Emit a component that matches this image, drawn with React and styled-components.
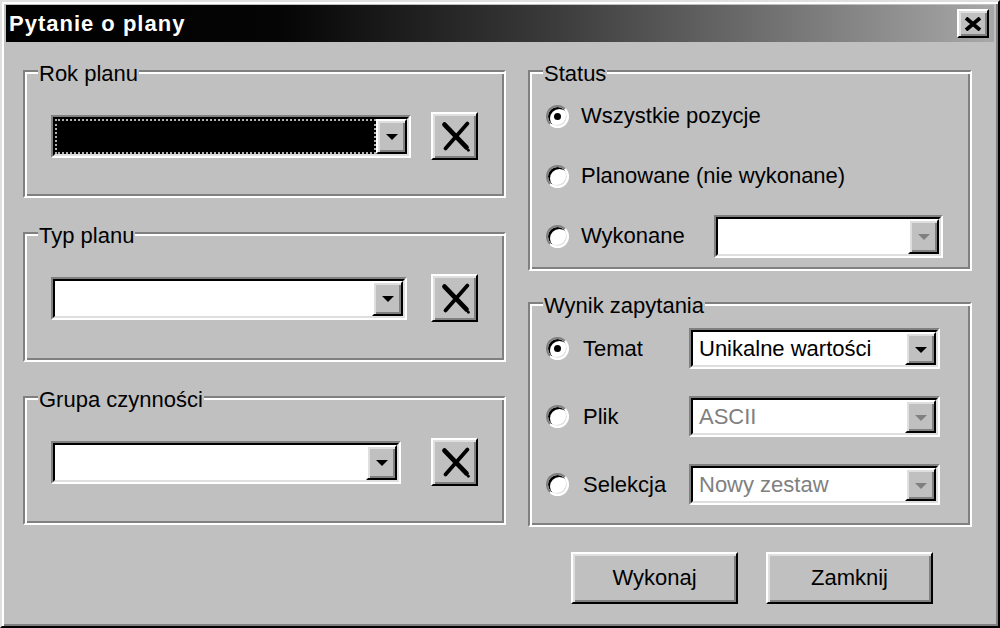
import React from 'react'
import styled, { createGlobalStyle } from 'styled-components'

const GlobalStyle = createGlobalStyle`
	html, body {
		margin: 0;
		padding: 0;
		background: #c0c0c0;
	}
	body {
		font-family: "Liberation Sans", Arial, sans-serif;
		font-size: 22px;
		color: #000;
	}
`

const Window = styled.div`
	width: 1000px;
	height: 628px;
	box-sizing: border-box;
	display: flex;
	flex-direction: column;
	background: #c0c0c0;
	border: 2px solid;
	border-color: #dfdfdf #000 #000 #dfdfdf;
	box-shadow: inset 2px 2px 0 #fff, inset -2px -2px 0 #808080;
	padding: 3px 4px 4px 4px;
`

const TitleBar = styled.div`
	height: 37px;
	flex: none;
	display: flex;
	align-items: center;
	justify-content: space-between;
	padding: 0 5px 0 3px;
	background: linear-gradient(to right, #000 0%, #050505 28%, #3a3a3a 55%, #a8a8a8 100%);
`

const Title = styled.span`
	color: #fff;
	font-weight: bold;
	font-size: 22px;
	letter-spacing: 1px;
`

const raised = `
	border: 2px solid;
	border-color: #fff #000 #000 #fff;
	box-shadow: inset 2px 2px 0 #dfdfdf, inset -2px -2px 0 #808080;
	background: #c0c0c0;
	box-sizing: border-box;
`

const CloseButton = styled.div`
	${raised}
	width: 32px;
	height: 29px;
	display: flex;
	align-items: center;
	justify-content: center;
`

const Body = styled.div`
	flex: 1;
	display: flex;
	gap: 22px;
	padding: 28px 17px 0 17px;
`

const Column = styled.div`
	display: flex;
	flex-direction: column;
	gap: ${p => p.$gap}px;
	width: ${p => p.$width}px;
`

// etched frame: dark line outside, white line inside (top/left), reversed bottom/right
const Group = styled.div`
	position: relative;
	height: ${p => p.$height}px;
	box-sizing: border-box;
	border: 2px solid;
	border-color: #808080 #fff #fff #808080;
	box-shadow: inset 2px 2px 0 #fff, inset -2px -2px 0 #808080;
	padding: ${p => p.$pad};
`

const Legend = styled.span`
	position: absolute;
	top: -10px;
	left: 13px;
	padding: 0 1px;
	background: #c0c0c0;
	line-height: 24px;
	white-space: nowrap;
`

const FieldRow = styled.div`
	display: flex;
	align-items: center;
	justify-content: space-between;
	padding: 0 ${p => p.$right}px 0 ${p => p.$left}px;
`

const ComboFrame = styled.div`
	width: ${p => p.$width}px;
	height: ${p => p.$height || 43}px;
	box-sizing: border-box;
	border: 2px solid;
	border-color: #808080 #fff #fff #808080;
	flex: none;
`

const ComboInner = styled.div`
	height: 100%;
	box-sizing: border-box;
	border: 2px solid;
	border-color: #000 #dfdfdf #dfdfdf #000;
	background: #fff;
	display: flex;
`

const FieldText = styled.div`
	flex: 1;
	display: flex;
	align-items: center;
	padding-left: 6px;
	white-space: nowrap;
	overflow: hidden;
	color: ${p => (p.$disabled ? '#808080' : '#000')};
	background: ${p => (p.$selected ? '#000' : '#fff')};
	outline: ${p => (p.$selected ? '2px dotted #b0b0b0' : 'none')};
	outline-offset: -2px;
`

const DropButton = styled.div`
	${raised}
	width: 31px;
	flex: none;
	display: flex;
	align-items: center;
	justify-content: center;
`

const Arrow = styled.span`
	width: 0;
	height: 0;
	border-left: 6px solid transparent;
	border-right: 6px solid transparent;
	border-top: 6px solid ${p => (p.$disabled ? '#808080' : '#000')};
	margin-top: 2px;
`

const ClearButton = styled.div`
	${raised}
	width: 47px;
	height: 48px;
	flex: none;
	display: flex;
	align-items: center;
	justify-content: center;
`

const RadioList = styled.div`
	display: flex;
	flex-direction: column;
	gap: ${p => p.$gap}px;
`

const RadioRow = styled.div`
	display: flex;
	align-items: center;
	height: ${p => p.$height}px;
`

const Radio = styled.span`
	width: 23px;
	height: 23px;
	flex: none;
	box-sizing: border-box;
	border-radius: 50%;
	border: 2px solid;
	border-color: #808080 #fff #fff #808080;
	box-shadow: inset 2px 2px 0 #000, inset -1px -1px 0 #dfdfdf;
	background: #fff;
	display: flex;
	align-items: center;
	justify-content: center;
	&::after {
		content: '';
		width: 7px;
		height: 7px;
		border-radius: 50%;
		background: ${p => (p.$checked ? '#000' : 'transparent')};
	}
`

const RadioLabel = styled.span`
	margin-left: ${p => p.$gap || 12}px;
	white-space: nowrap;
	width: ${p => (p.$width ? p.$width + 'px' : 'auto')};
`

const ButtonRow = styled.div`
	display: flex;
	gap: 28px;
	padding: 0 0 0 43px;
	margin-top: -6px;
`

const PushButton = styled.div`
	${raised}
	width: 167px;
	height: 52px;
	display: flex;
	align-items: center;
	justify-content: center;
`

const CloseGlyph = () => (
	<svg width="18" height="14" viewBox="0 0 18 14">
		<path d="M2 1 L16 13 M16 1 L2 13" stroke="#000" strokeWidth="3.8" />
	</svg>
)

const ClearGlyph = () => (
	<svg width="43" height="44" viewBox="0 0 43 44" style={{ marginLeft: 2 }}>
		<path d="M10 10 L33 34" stroke="#000" strokeWidth="5" strokeLinecap="round" />
		<path d="M34 9 L11 35" stroke="#000" strokeWidth="4" strokeLinecap="round" />
		<circle cx="35" cy="37" r="1.5" fill="#000" />
	</svg>
)

const Combo = ({ width, height, text, disabled, selected }) => (
	<ComboFrame $width={width} $height={height}>
		<ComboInner>
			<FieldText $disabled={disabled} $selected={selected}>{text}</FieldText>
			<DropButton>
				<Arrow $disabled={disabled} />
			</DropButton>
		</ComboInner>
	</ComboFrame>
)

const PickGroup = ({ label, height, comboWidth, selected }) => (
	<Group $height={height} $pad="40px 0 0 0">
		<Legend>{label}</Legend>
		<FieldRow $left={26} $right={26}>
			<Combo width={comboWidth} selected={selected} />
			<ClearButton>
				<ClearGlyph />
			</ClearButton>
		</FieldRow>
	</Group>
)

export default function App() {
	return (
		<>
			<GlobalStyle />
			<Window>
				<TitleBar>
					<Title>Pytanie o plany</Title>
					<CloseButton>
						<CloseGlyph />
					</CloseButton>
				</TitleBar>
				<Body>
					<Column $width={483} $gap={34}>
						<PickGroup label="Rok planu" height={128} comboWidth={360} selected />
						<PickGroup label="Typ planu" height={130} comboWidth={356} />
						<PickGroup label="Grupa czynności" height={129} comboWidth={350} />
					</Column>
					<Column $width={444} $gap={31}>
						<Group $height={201} $pad="22px 26px 0 16px">
							<Legend>Status</Legend>
							<RadioList $gap={16}>
								<RadioRow $height={44}>
									<Radio $checked />
									<RadioLabel>Wszystkie pozycje</RadioLabel>
								</RadioRow>
								<RadioRow $height={44}>
									<Radio />
									<RadioLabel>Planowane (nie wykonane)</RadioLabel>
								</RadioRow>
								<RadioRow $height={44}>
									<Radio />
									<RadioLabel $width={133}>Wykonane</RadioLabel>
									<Combo width={229} disabled />
								</RadioRow>
							</RadioList>
						</Group>
						<Group $height={225} $pad="24px 29px 0 16px">
							<Legend>Wynik zapytania</Legend>
							<RadioList $gap={27}>
								<RadioRow $height={41}>
									<Radio $checked />
									<RadioLabel $gap={14} $width={106}>Temat</RadioLabel>
									<Combo width={251} height={41} text="Unikalne wartości" />
								</RadioRow>
								<RadioRow $height={41}>
									<Radio />
									<RadioLabel $gap={14} $width={106}>Plik</RadioLabel>
									<Combo width={251} height={41} text="ASCII" disabled />
								</RadioRow>
								<RadioRow $height={41}>
									<Radio />
									<RadioLabel $gap={14} $width={106}>Selekcja</RadioLabel>
									<Combo width={251} height={41} text="Nowy zestaw" disabled />
								</RadioRow>
							</RadioList>
						</Group>
						<ButtonRow>
							<PushButton>Wykonaj</PushButton>
							<PushButton>Zamknij</PushButton>
						</ButtonRow>
					</Column>
				</Body>
			</Window>
		</>
	)
}
